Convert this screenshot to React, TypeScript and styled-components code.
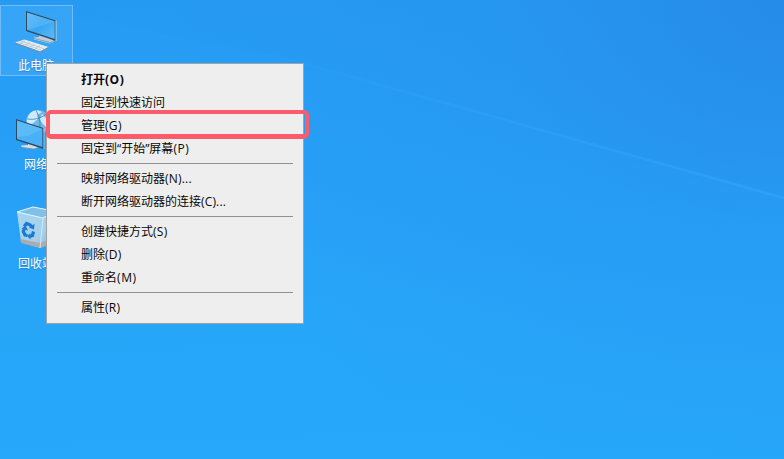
import React from 'react';
import styled, { createGlobalStyle } from 'styled-components';

const GlobalStyle = createGlobalStyle`
  body { margin: 0; overflow: hidden; }
`;

const Desktop = styled.main`
  position: relative;
  width: 784px;
  height: 459px;
  overflow: hidden;
  font-family: 'Open Sans', 'Noto Sans CJK SC', sans-serif;
  font-size: 12px;
  background:
    radial-gradient(ellipse 640px 520px at 100% 0, rgba(38, 136, 232, 0.85), rgba(38, 144, 238, 0.4) 45%, rgba(38, 150, 242, 0) 100%),
    linear-gradient(178deg, #269af2 0%, #279ff5 30%, #27a6f8 65%, #27a9fa 100%);
`;

const Beam = styled.svg`
  position: absolute;
  inset: 0;
`;

const Shortcuts = styled.div`
  position: relative;
  display: flex;
  flex-direction: column;
  gap: 28px;
  width: 73px;
  padding-top: 5px;
`;

const Shortcut = styled.div<{ $selected?: boolean }>`
  box-sizing: border-box;
  display: flex;
  flex-direction: column;
  align-items: center;
  height: 71px;
  padding-right: 1px;
  border: 1px solid ${(p) => (p.$selected ? '#70bcf5' : 'transparent')};
  background: ${(p) => (p.$selected ? 'rgba(105, 190, 255, 0.25)' : 'transparent')};
`;

const ShortcutIcon = styled.svg`
  display: block;
  flex: none;
  width: 48px;
  height: 50px;
`;

const ShortcutLabel = styled.span`
  padding-top: 1px;
  color: #fff;
  line-height: 18px;
  white-space: nowrap;
  text-shadow: 0 1px 1px rgba(0, 50, 100, 0.3);
`;

const Menu = styled.div`
  position: absolute;
  left: 46px;
  top: 63px;
  box-sizing: border-box;
  width: 258px;
  height: 261px;
  padding: 4px 0;
  border: 1px solid #a0a3a6;
  background: #eee;
`;

const MenuItem = styled.div<{ $bold?: boolean }>`
  height: 23px;
  padding-left: 34px;
  line-height: 23px;
  color: #080808;
  white-space: nowrap;
  font-weight: ${(p) => (p.$bold ? 700 : 400)};
`;

const Latin = styled.span<{ $spacing?: number }>`
  letter-spacing: ${(p) => p.$spacing ?? 0.3}px;
`;

const Separator = styled.div`
  height: 1px;
  margin: 3px 10px;
  background: #919191;
`;

const Highlight = styled.div`
  position: absolute;
  left: 46px;
  top: 110px;
  box-sizing: border-box;
  width: 263px;
  height: 29px;
  border: 4.500px solid #fc5b69;
  border-bottom-width: 5px;
  border-radius: 5px;
`;

const ComputerIcon = () => (
  <ShortcutIcon viewBox="12 6 48 50">
    <defs>
      <linearGradient id="pcScreen" x1="0" y1="0" x2="1" y2="1">
        <stop offset="0" stopColor="#55b8fb" />
        <stop offset=".5" stopColor="#38a5f2" />
        <stop offset="1" stopColor="#5abdfb" />
      </linearGradient>
    </defs>
    <path d="M39 35 48 37.500 55 41.500 50 43.500 34 39.500 34 37.500 39 37Z" fill="#b9cfdd" />
    <path d="M34 38.500 50 42.500 54 41.500" fill="none" stroke="#7895a8" strokeWidth=".8" />
    <path d="M26 11 56 20.500V41L26 31Z" fill="#34495b" />
    <path d="M56 20.500V41" stroke="#c8d6df" strokeWidth="1" />
    <path d="M27 12.400 54.700 21.300V39L27 30Z" fill="url(#pcScreen)" />
    <path d="M27 12.400 54.700 21.300 41 26 27 30Z" fill="#78c8fc" opacity=".35" />
    <path d="M15 42.500 24.500 39.500 48.500 47 40 51.500Z" fill="#e4edf3" />
    <path d="M15 42.500 40 51.500 48.500 47V48.300L40 52.500 15 43.800Z" fill="#778d9d" />
    <path d="M18 42.200 41 50M21 41 44 48.700M20 43.500 25 41M25 45.200 30 42.500M30 47 35 44M35 48.600 40 45.700" stroke="#a1afba" strokeWidth=".5" />
  </ShortcutIcon>
);

const NetworkIcon = () => (
  <ShortcutIcon viewBox="12 105 48 50">
    <circle cx="38" cy="122" r="12" fill="#6eb9e8" />
    <path d="M27 119Q29 111 37 110L42 112 37 115 38 119 32 124 27 124ZM42 114 47 119 46 127 42 123 40 119Z" fill="#e2f2fb" opacity=".85" />
    <path d="M27 119Q38 121 48 113M36 110Q43 123 38 134" fill="none" stroke="#217bb4" strokeWidth=".7" />
    <path d="M28 142V145L21 145.500 22 147.500 34 149 42 146 34 143.500Z" fill="#d4dde3" />
    <path d="M22 147.500 34 149.200 42 146.200" fill="none" stroke="#7796aa" />
    <path d="M16 119 43.500 128V149L16 140Z" fill="#30495f" />
    <path d="M17 120.500 42.400 128.700V146.900L17 138.900Z" fill="#48b1f7" />
    <path d="M17 120.500 42.400 128.700 28 136 17 137Z" fill="#80cbfa" opacity=".35" />
    <path d="M44 128V149" stroke="#b4cfe0" strokeWidth=".8" />
  </ShortcutIcon>
);

const RecycleBinIcon = () => (
  <ShortcutIcon viewBox="12 204 48 50">
    <defs>
      <linearGradient id="binBody" x1="0" y1="0" x2="1" y2="1">
        <stop offset="0" stopColor="#a5d5f2" />
        <stop offset=".65" stopColor="#a6d0ea" />
        <stop offset="1" stopColor="#85b5d4" />
      </linearGradient>
    </defs>
    <path d="M17 212 33 207 54 211 50 244 40 248 21 242Z" fill="url(#binBody)" />
    <path d="M17 212 33 207 54 211 43 218Z" fill="#7fbfe8" stroke="#e6f5fc" strokeWidth="1" />
    <path d="M20.500 239 40 243 50 239 49 245 40 248 21 243Z" fill="#a9acab" />
    <path d="M43 218 40 248" stroke="#d7ecf7" strokeWidth=".9" />
    <g fill="none" stroke="#1d79d3" strokeWidth="3.200">
      <path d="M24.200 226.500 26.500 223.500 30 224.800 31.700 227" />
      <path d="M24.600 228 23.300 231.500 25 235 27.500 235.500" />
      <path d="M29.500 236.500 32.500 235.500 33.500 231.500" />
    </g>
    <g fill="#1d79d3">
      <path d="M34.500 223.800 34 229.500 29 227.500Z" />
      <path d="M21.500 228.500 25.500 225.800 28.200 230.500Z" />
      <path d="M30.500 233.200 27 236 30.500 239.500Z" />
    </g>
  </ShortcutIcon>
);

type Entry = { label: string; latin?: string; bold?: boolean; spacing?: number };

const groups: Entry[][] = [
  [
    { label: '打开', latin: '(O)', bold: true, spacing: 0.5 },
    { label: '固定到快速访问' },
    { label: '管理', latin: '(G)' },
    { label: '固定到“开始”屏幕', latin: '(P)', spacing: 0.6 },
  ],
  [
    { label: '映射网络驱动器', latin: '(N)...', spacing: 0.2 },
    { label: '断开网络驱动器的连接', latin: '(C)...', spacing: 0.15 },
  ],
  [
    { label: '创建快捷方式', latin: '(S)' },
    { label: '删除', latin: '(D)' },
    { label: '重命名', latin: '(M)', spacing: 0.6 },
  ],
  [{ label: '属性', latin: '(R)' }],
];

export default function App() {
  return (
    <Desktop>
      <GlobalStyle />
      <Beam width="784" height="459" viewBox="0 0 784 459">
        <defs>
          <linearGradient id="beamStroke" gradientUnits="userSpaceOnUse" x1="270" y1="54" x2="784" y2="198">
            <stop offset="0" stopColor="#35a9fa" stopOpacity=".1" />
            <stop offset="1" stopColor="#36a6fa" stopOpacity=".55" />
          </linearGradient>
        </defs>
        <path d="M0 0 270 54 784 198V459H0Z" fill="#28aaff" opacity=".1" />
        <path d="M270 54 784 198" fill="none" stroke="url(#beamStroke)" strokeWidth="2.500" />
      </Beam>
      <Shortcuts>
        <Shortcut $selected>
          <ComputerIcon />
          <ShortcutLabel>此电脑</ShortcutLabel>
        </Shortcut>
        <Shortcut>
          <NetworkIcon />
          <ShortcutLabel>网络</ShortcutLabel>
        </Shortcut>
        <Shortcut>
          <RecycleBinIcon />
          <ShortcutLabel>回收站</ShortcutLabel>
        </Shortcut>
      </Shortcuts>
      <Menu>
        {groups.map((group, index) => (
          <React.Fragment key={index}>
            {index > 0 && <Separator />}
            {group.map((item) => (
              <MenuItem key={item.label} $bold={item.bold}>
                {item.label}
                {item.latin && <Latin $spacing={item.spacing}>{item.latin}</Latin>}
              </MenuItem>
            ))}
          </React.Fragment>
        ))}
      </Menu>
      <Highlight />
    </Desktop>
  );
}
